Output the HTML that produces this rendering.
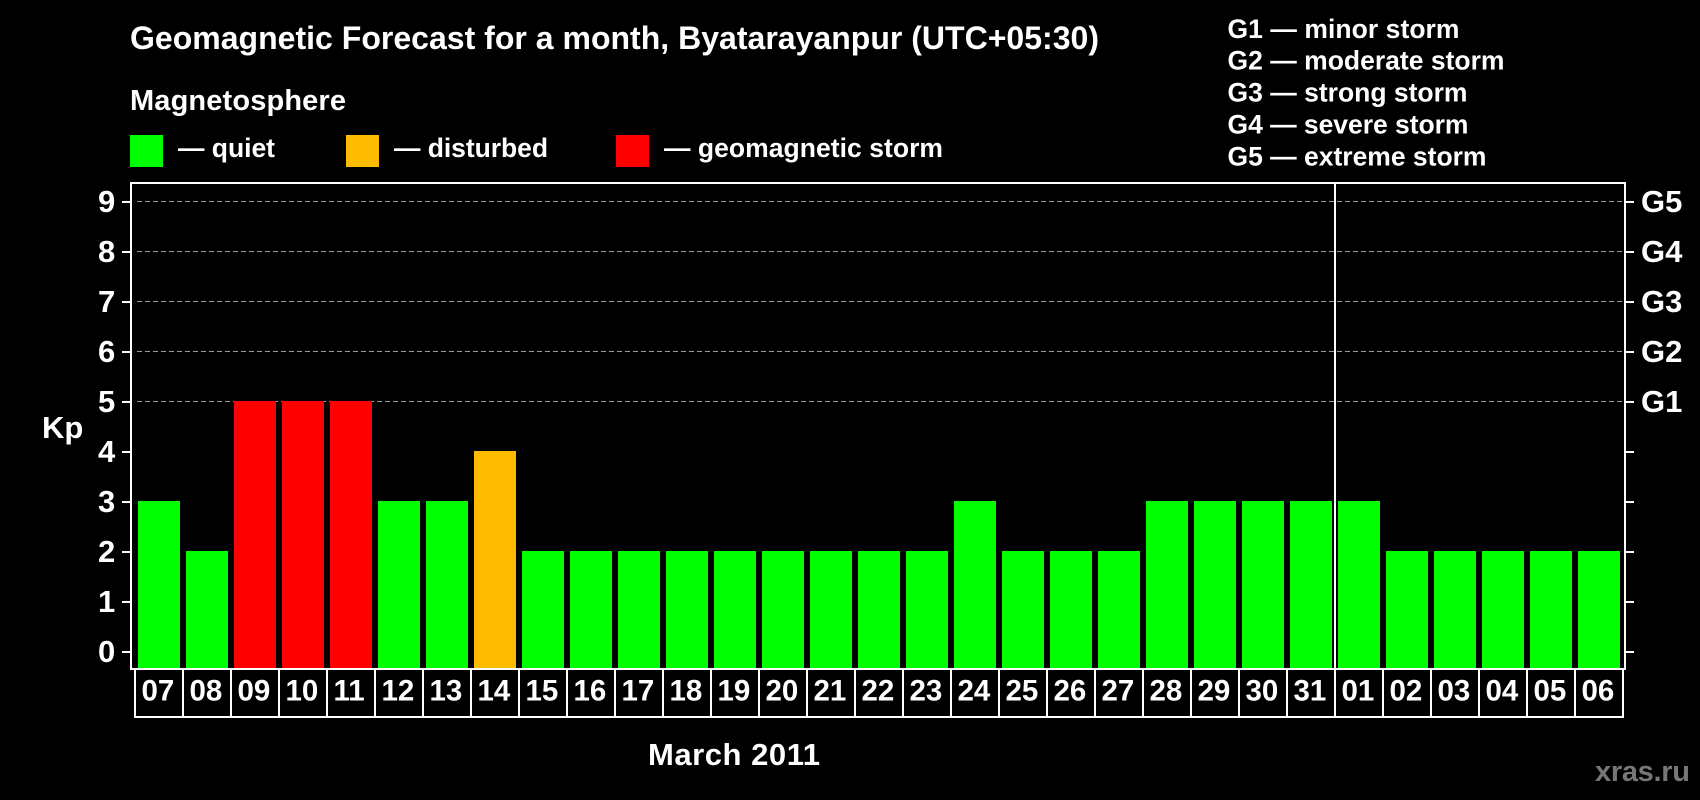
<!DOCTYPE html>
<html><head><meta charset="utf-8"><style>
html,body{margin:0;padding:0;background:#000;width:1700px;height:800px;overflow:hidden}
svg{display:block}
text{font-family:"Liberation Sans",Arial,sans-serif;font-weight:700;fill:#fff}
.g{font-size:26.5px}.d{font-size:29.5px}.t{font-size:31px}.tr{font-size:31px}
</style></head><body>
<svg width="1700" height="800" viewBox="0 0 1700 800" xmlns="http://www.w3.org/2000/svg">
<rect width="1700" height="800" fill="#000"/>
<text x="130" y="49" font-size="32" textLength="969">Geomagnetic Forecast for a month, Byatarayanpur (UTC+05:30)</text>
<text x="130" y="110" font-size="29" textLength="216">Magnetosphere</text>
<g shape-rendering="crispEdges">
<rect x="130" y="135" width="33" height="32" fill="#0f0"/>
<rect x="346" y="135" width="33" height="32" fill="#fb0"/>
<rect x="616" y="135" width="33" height="32" fill="#f00"/>
</g>
<text x="178" y="157" font-size="26.5" textLength="97">— quiet</text>
<text x="394" y="157" font-size="26.5" textLength="154">— disturbed</text>
<text x="664" y="157" font-size="26.5" textLength="279">— geomagnetic storm</text>
<text class="g" x="1227.5" y="38" textLength="232">G1 — minor storm</text>
<text class="g" x="1227.5" y="69.5" textLength="277">G2 — moderate storm</text>
<text class="g" x="1227.5" y="101.5" textLength="240">G3 — strong storm</text>
<text class="g" x="1227.5" y="133.5" textLength="241">G4 — severe storm</text>
<text class="g" x="1227.5" y="165.5" textLength="259">G5 — extreme storm</text>
<g stroke="#999" stroke-width="1" stroke-dasharray="5 3" shape-rendering="crispEdges">
<line x1="137" y1="201.5" x2="1624" y2="201.5"/>
<line x1="137" y1="251.5" x2="1624" y2="251.5"/>
<line x1="137" y1="301.5" x2="1624" y2="301.5"/>
<line x1="137" y1="351.5" x2="1624" y2="351.5"/>
<line x1="137" y1="401.5" x2="1624" y2="401.5"/>
</g>
<g shape-rendering="crispEdges">
<rect x="138" y="501" width="42" height="167" fill="#0f0"/>
<rect x="186" y="551" width="42" height="117" fill="#0f0"/>
<rect x="234" y="401" width="42" height="267" fill="#f00"/>
<rect x="282" y="401" width="42" height="267" fill="#f00"/>
<rect x="330" y="401" width="42" height="267" fill="#f00"/>
<rect x="378" y="501" width="42" height="167" fill="#0f0"/>
<rect x="426" y="501" width="42" height="167" fill="#0f0"/>
<rect x="474" y="451" width="42" height="217" fill="#fb0"/>
<rect x="522" y="551" width="42" height="117" fill="#0f0"/>
<rect x="570" y="551" width="42" height="117" fill="#0f0"/>
<rect x="618" y="551" width="42" height="117" fill="#0f0"/>
<rect x="666" y="551" width="42" height="117" fill="#0f0"/>
<rect x="714" y="551" width="42" height="117" fill="#0f0"/>
<rect x="762" y="551" width="42" height="117" fill="#0f0"/>
<rect x="810" y="551" width="42" height="117" fill="#0f0"/>
<rect x="858" y="551" width="42" height="117" fill="#0f0"/>
<rect x="906" y="551" width="42" height="117" fill="#0f0"/>
<rect x="954" y="501" width="42" height="167" fill="#0f0"/>
<rect x="1002" y="551" width="42" height="117" fill="#0f0"/>
<rect x="1050" y="551" width="42" height="117" fill="#0f0"/>
<rect x="1098" y="551" width="42" height="117" fill="#0f0"/>
<rect x="1146" y="501" width="42" height="167" fill="#0f0"/>
<rect x="1194" y="501" width="42" height="167" fill="#0f0"/>
<rect x="1242" y="501" width="42" height="167" fill="#0f0"/>
<rect x="1290" y="501" width="42" height="167" fill="#0f0"/>
<rect x="1338" y="501" width="42" height="167" fill="#0f0"/>
<rect x="1386" y="551" width="42" height="117" fill="#0f0"/>
<rect x="1434" y="551" width="42" height="117" fill="#0f0"/>
<rect x="1482" y="551" width="42" height="117" fill="#0f0"/>
<rect x="1530" y="551" width="42" height="117" fill="#0f0"/>
<rect x="1578" y="551" width="42" height="117" fill="#0f0"/>
<g fill="#fff">
<rect x="130" y="182" width="1496" height="2"/>
<rect x="130" y="182" width="2" height="488"/>
<rect x="1624" y="182" width="2" height="488"/>
<rect x="130" y="668" width="1496" height="2"/>
<rect x="1334" y="182" width="2" height="486"/>
<rect x="122" y="201" width="8" height="2"/><rect x="122" y="251" width="8" height="2"/><rect x="122" y="301" width="8" height="2"/><rect x="122" y="351" width="8" height="2"/><rect x="122" y="401" width="8" height="2"/><rect x="122" y="451" width="8" height="2"/><rect x="122" y="501" width="8" height="2"/><rect x="122" y="551" width="8" height="2"/><rect x="122" y="601" width="8" height="2"/><rect x="122" y="651" width="8" height="2"/>
<rect x="1626" y="201" width="8" height="2"/><rect x="1626" y="251" width="8" height="2"/><rect x="1626" y="301" width="8" height="2"/><rect x="1626" y="351" width="8" height="2"/><rect x="1626" y="401" width="8" height="2"/><rect x="1626" y="451" width="8" height="2"/><rect x="1626" y="501" width="8" height="2"/><rect x="1626" y="551" width="8" height="2"/><rect x="1626" y="601" width="8" height="2"/><rect x="1626" y="651" width="8" height="2"/>
<rect x="134" y="716" width="1490" height="2"/>
<rect x="134" y="668" width="2" height="50"/><rect x="182" y="668" width="2" height="50"/><rect x="230" y="668" width="2" height="50"/><rect x="278" y="668" width="2" height="50"/><rect x="326" y="668" width="2" height="50"/><rect x="374" y="668" width="2" height="50"/><rect x="422" y="668" width="2" height="50"/><rect x="470" y="668" width="2" height="50"/><rect x="518" y="668" width="2" height="50"/><rect x="566" y="668" width="2" height="50"/><rect x="614" y="668" width="2" height="50"/><rect x="662" y="668" width="2" height="50"/><rect x="710" y="668" width="2" height="50"/><rect x="758" y="668" width="2" height="50"/><rect x="806" y="668" width="2" height="50"/><rect x="854" y="668" width="2" height="50"/><rect x="902" y="668" width="2" height="50"/><rect x="950" y="668" width="2" height="50"/><rect x="998" y="668" width="2" height="50"/><rect x="1046" y="668" width="2" height="50"/><rect x="1094" y="668" width="2" height="50"/><rect x="1142" y="668" width="2" height="50"/><rect x="1190" y="668" width="2" height="50"/><rect x="1238" y="668" width="2" height="50"/><rect x="1286" y="668" width="2" height="50"/><rect x="1334" y="668" width="2" height="50"/><rect x="1382" y="668" width="2" height="50"/><rect x="1430" y="668" width="2" height="50"/><rect x="1478" y="668" width="2" height="50"/><rect x="1526" y="668" width="2" height="50"/><rect x="1574" y="668" width="2" height="50"/><rect x="1622" y="668" width="2" height="50"/>
</g></g>
<text class="t" x="98" y="212">9</text><text class="t" x="98" y="262">8</text><text class="t" x="98" y="312">7</text><text class="t" x="98" y="362">6</text><text class="t" x="98" y="412">5</text><text class="t" x="98" y="462">4</text><text class="t" x="98" y="512">3</text><text class="t" x="98" y="562">2</text><text class="t" x="98" y="612">1</text><text class="t" x="98" y="662">0</text>
<text class="tr" x="1641" y="212">G5</text><text class="tr" x="1641" y="262">G4</text><text class="tr" x="1641" y="312">G3</text><text class="tr" x="1641" y="362">G2</text><text class="tr" x="1641" y="412">G1</text>
<text x="42" y="438" font-size="31">Kp</text>
<text class="d" x="141.5" y="700.5">07</text><text class="d" x="189.5" y="700.5">08</text><text class="d" x="237.5" y="700.5">09</text><text class="d" x="285.5" y="700.5">10</text><text class="d" x="333.5" y="700.5">11</text><text class="d" x="381.5" y="700.5">12</text><text class="d" x="429.5" y="700.5">13</text><text class="d" x="477.5" y="700.5">14</text><text class="d" x="525.5" y="700.5">15</text><text class="d" x="573.5" y="700.5">16</text><text class="d" x="621.5" y="700.5">17</text><text class="d" x="669.5" y="700.5">18</text><text class="d" x="717.5" y="700.5">19</text><text class="d" x="765.5" y="700.5">20</text><text class="d" x="813.5" y="700.5">21</text><text class="d" x="861.5" y="700.5">22</text><text class="d" x="909.5" y="700.5">23</text><text class="d" x="957.5" y="700.5">24</text><text class="d" x="1005.5" y="700.5">25</text><text class="d" x="1053.5" y="700.5">26</text><text class="d" x="1101.5" y="700.5">27</text><text class="d" x="1149.5" y="700.5">28</text><text class="d" x="1197.5" y="700.5">29</text><text class="d" x="1245.5" y="700.5">30</text><text class="d" x="1293.5" y="700.5">31</text><text class="d" x="1341.5" y="700.5">01</text><text class="d" x="1389.5" y="700.5">02</text><text class="d" x="1437.5" y="700.5">03</text><text class="d" x="1485.5" y="700.5">04</text><text class="d" x="1533.5" y="700.5">05</text><text class="d" x="1581.5" y="700.5">06</text>
<text x="648" y="765" font-size="31" textLength="172">March 2011</text>
<text x="1595" y="781" font-size="29" style="fill:#777" textLength="95">xras.ru</text>
</svg>
</body></html>
